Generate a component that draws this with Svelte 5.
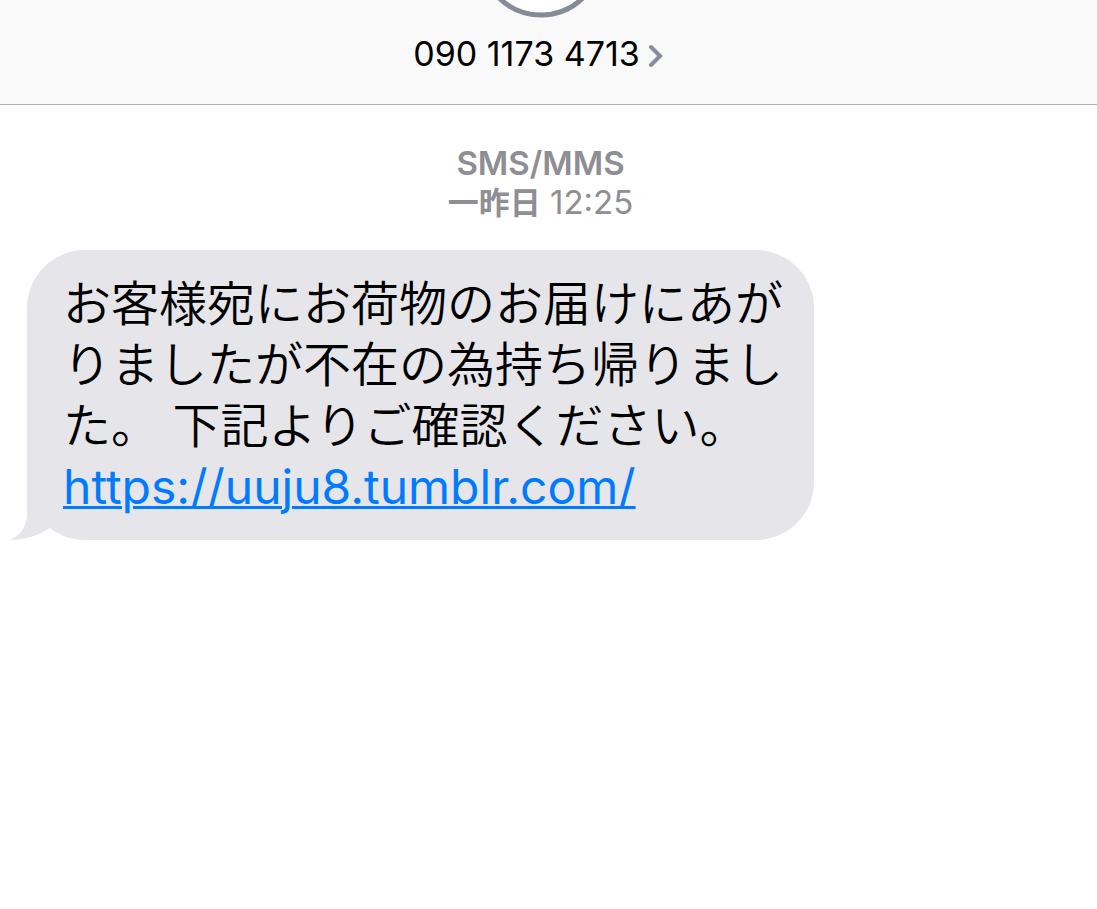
<script>
    const phone = '090 1173 4713'
    const lines = [
        'お客様宛にお荷物のお届けにあが',
        'りましたが不在の為持ち帰りまし',
        'た。 下記よりご確認ください。'
    ]
    const link = 'https://uuju8.tumblr.com/'
</script>

<div class="page">
    <header>
        <svg class="avatar" width="120" height="18" viewBox="0 0 120 18" aria-hidden="true">
            <circle cx="60" cy="-45" r="60" fill="#fff" stroke="#858b97" stroke-width="5" />
        </svg>
        <button class="contact">
            <span>{phone}</span>
            <svg width="20" height="26" viewBox="0 0 20 26" aria-hidden="true">
                <path d="M3 6 L12 15 L3 24" fill="none" stroke="#858e99" stroke-width="4" stroke-linecap="round" />
            </svg>
        </button>
    </header>

    <main>
        <div class="stamp">
            <div class="kind">SMS/MMS</div>
            <div><b>一昨日</b> 12:25</div>
        </div>

        <div class="bubble">
            <svg class="tail" width="56" height="64" viewBox="0 0 56 64" aria-hidden="true">
                <path d="M17 0 V38 C17 50 10 60 0 64 C14 64 27 60 38 53 L56 40 V0 Z" fill="#e5e5ea" />
            </svg>
            <p>
                {#each lines as line}
                    {line}<br />
                {/each}
                <a href={link}>{link}</a>
            </p>
        </div>
    </main>
</div>

<style>
    :global(body) {
        margin: 0;
        background: #fff;
    }
    .page {
        font-family: Inter, 'Noto Sans CJK JP', sans-serif;
        color: #000;
    }
    header {
        display: flex;
        flex-direction: column;
        align-items: center;
        background: #f9f9f9;
        border-bottom: 1px solid #b2b2b2;
        padding-right: 16px;
        padding-bottom: 30px;
    }
    .avatar {
        display: block;
    }
    .contact {
        display: flex;
        align-items: center;
        gap: 8px;
        margin-top: 16px;
        padding: 0;
        border: 0;
        background: none;
        color: inherit;
        font-family: inherit;
        font-size: 34px;
        line-height: 40px;
        cursor: pointer;
    }
    .stamp {
        padding: 39px 16px 0 0;
        text-align: center;
        color: #8e8e93;
        font-size: 33px;
        line-height: 39px;
    }
    .kind {
        font-weight: 600;
    }
    .stamp b {
        font-size: 31px;
    }
    .bubble {
        position: relative;
        width: fit-content;
        margin: 28px 0 0 27px;
        padding: 23px 31px 23px 36px;
        border-radius: 58px;
        background: #e5e5ea;
    }
    .tail {
        position: absolute;
        left: -17px;
        bottom: 0;
    }
    p {
        position: relative;
        margin: 0;
        font-size: 48px;
        font-weight: 350;
        line-height: 61px;
    }
    a {
        color: #007aff;
        font-weight: 400;
        text-decoration-thickness: 3px;
    }
</style>
